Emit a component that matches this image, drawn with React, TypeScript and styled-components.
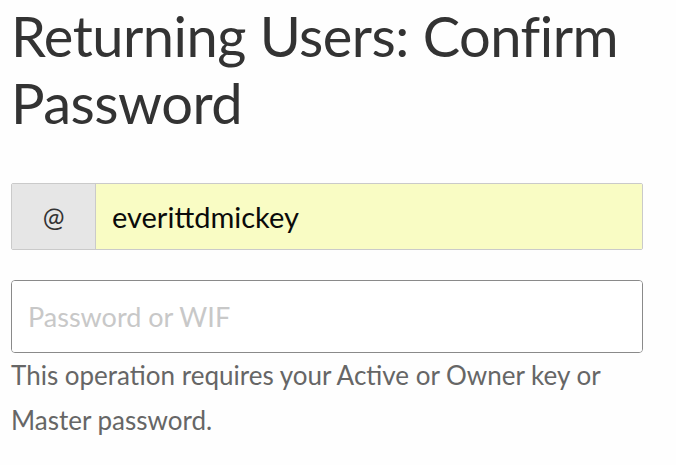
import React from "react";
import styled, { createGlobalStyle } from "styled-components";

const Global = createGlobalStyle`
  html, body { margin: 0; padding: 0; background: #fefefe; }
  body { font-family: Lato, "Open Sans", sans-serif; color: #333; }
  * { box-sizing: border-box; }
`;

const Page = styled.div`
  width: 676px;
  padding: 0 33px 0 11px;
`;

const Title = styled.h1`
  margin: 0;
  padding-top: 2px;
  font-weight: 400;
  font-size: 56px;
  line-height: 67px;
  color: #333;
  letter-spacing: -0.5px;
`;

const Form = styled.div`
  margin-top: 47px;
  display: flex;
  flex-direction: column;
`;

const Group = styled.div`
  display: flex;
  height: 67px;
  border: 1px solid #cacaca;
  border-radius: 2px;
  overflow: hidden;
`;

const Addon = styled.span`
  width: 84px;
  display: flex;
  align-items: center;
  justify-content: center;
  background: #e6e6e6;
  border-right: 1px solid #cacaca;
  font-size: 26px;
  color: #333;
`;

const Field = styled.input<{ $filled?: boolean }>`
  flex: 1;
  min-width: 0;
  border: none;
  outline: none;
  background: ${(p) => (p.$filled ? "#f9fcc4" : "#fff")};
  font-family: inherit;
  font-size: ${(p) => (p.$filled ? "29px" : "27px")};
  color: #0a0a0a;
  padding: 0 16px;
  &::placeholder { color: #c8c8c8; }
`;

const PasswordBox = styled.div`
  margin-top: 30px;
  height: 73px;
  display: flex;
  border: 1px solid #8a8a8a;
  border-radius: 4px;
  overflow: hidden;
  box-shadow: inset 0 1px 2px rgba(10, 10, 10, 0.1);
`;

const Help = styled.p`
  margin: 0;
  font-size: 26px;
  line-height: 45px;
  color: #666;
`;

export default function App() {
  return (
    <>
      <Global />
      <Page>
        <Title>Returning Users: Confirm Password</Title>
        <Form>
          <Group>
            <Addon>@</Addon>
            <Field $filled defaultValue="everittdmickey" />
          </Group>
          <PasswordBox>
            <Field type="password" placeholder="Password or WIF" />
          </PasswordBox>
          <Help>This operation requires your Active or Owner key or Master password.</Help>
        </Form>
      </Page>
    </>
  );
}
